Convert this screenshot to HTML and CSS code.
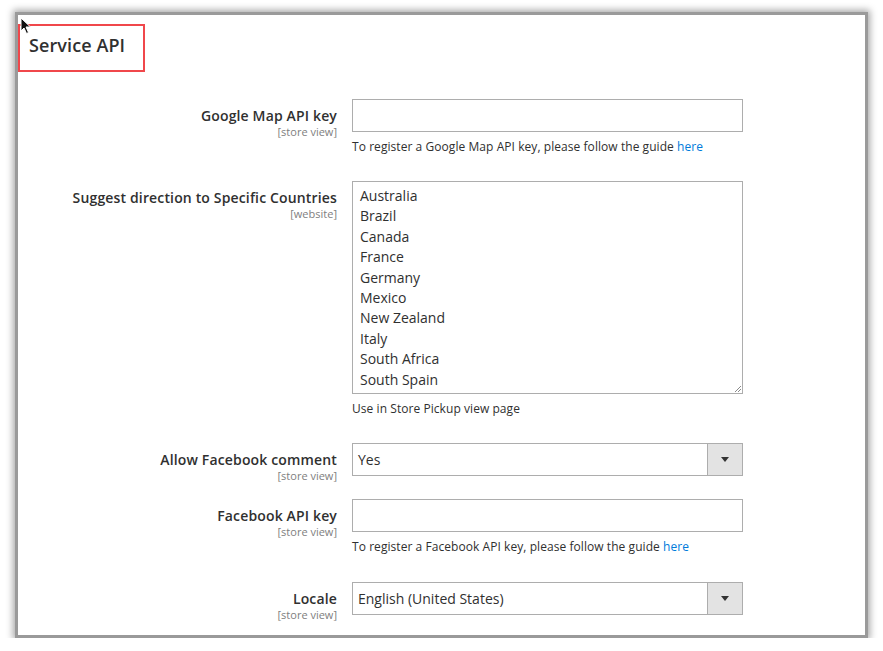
FILE: index.html
```html
<!DOCTYPE html>
<html>
<head>
<meta charset="utf-8">
<link rel="stylesheet" href="styles.css">
</head>
<body>
<div class="panel">
  <svg class="cursor" width="12" height="18" viewBox="0 0 12 18"><path d="M1 1 L1 14 L4 11 L6.5 16.5 L8.5 15.5 L6 10 L10.5 10 Z" fill="#111" stroke="#fff" stroke-width="1"/></svg>
  <div class="title-box"><h2 class="title">Service API</h2></div>

  <div class="row note-row">
    <div class="label"><div class="label-text">Google Map API key</div><div class="scope">[store view]</div></div>
    <div class="control">
      <div class="input"></div>
      <div class="note">To register a Google Map API key, please follow the guide <a href="#">here</a></div>
    </div>
  </div>

  <div class="row note-row">
    <div class="label"><div class="label-text">Suggest direction to Specific Countries</div><div class="scope">[website]</div></div>
    <div class="control">
      <div class="multiselect">
        <div class="opt">Australia</div>
        <div class="opt">Brazil</div>
        <div class="opt">Canada</div>
        <div class="opt">France</div>
        <div class="opt">Germany</div>
        <div class="opt">Mexico</div>
        <div class="opt">New Zealand</div>
        <div class="opt">Italy</div>
        <div class="opt">South Africa</div>
        <div class="opt">South Spain</div>
        <svg class="grip" width="9" height="9" viewBox="0 0 9 9"><path d="M8 2 L2 8 M8 5 L5 8" stroke="#8a8a8a" stroke-width="1"/></svg>
      </div>
      <div class="note">Use in Store Pickup view page</div>
    </div>
  </div>

  <div class="row plain-row">
    <div class="label"><div class="label-text">Allow Facebook comment</div><div class="scope">[store view]</div></div>
    <div class="control">
      <div class="select"><span class="value">Yes</span><span class="btn"><span class="tri"></span></span></div>
    </div>
  </div>

  <div class="row note-row note-row-wide">
    <div class="label"><div class="label-text">Facebook API key</div><div class="scope">[store view]</div></div>
    <div class="control">
      <div class="input"></div>
      <div class="note">To register a Facebook API key, please follow the guide <a href="#">here</a></div>
    </div>
  </div>

  <div class="row plain-row">
    <div class="label"><div class="label-text">Locale</div><div class="scope">[store view]</div></div>
    <div class="control">
      <div class="select"><span class="value">English (United States)</span><span class="btn"><span class="tri"></span></span></div>
    </div>
  </div>
</div>
</body>
</html>
```

FILE: styles.css
```css
html, body {
  margin: 0;
  padding: 0;
  background: #ffffff;
}
body {
  font-family: "Open Sans", "DejaVu Sans", sans-serif;
  color: #303030;
}
.panel {
  position: relative;
  box-sizing: border-box;
  margin: 12px 0 0 15px;
  width: 853px;
  height: 626px;
  border: 3px solid #9a9a9a;
  box-shadow: 0 0 7px 2px rgba(0, 0, 0, 0.35);
  background: #ffffff;
  overflow: hidden;
}
.cursor {
  position: absolute;
  left: 2px;
  top: 2px;
}
.title-box {
  box-sizing: border-box;
  margin-top: 9px;
  width: 127px;
  height: 48px;
  border: 2px solid #f0474b;
  padding: 7px 0 0 9px;
}
.title {
  margin: 0;
  font-size: 18px;
  line-height: 24px;
  font-weight: 600;
  letter-spacing: 0.1px;
  color: #303030;
}
.row {
  display: grid;
  grid-template-columns: 319px 391px;
  column-gap: 15px;
}
.title-box + .row { margin-top: 27px; }
.note-row { margin-bottom: 26px; }
.note-row-wide { margin-bottom: 27px; }
.plain-row { margin-bottom: 17px; }
.label {
  text-align: right;
  padding-top: 8px;
}
.label-text {
  font-size: 14px;
  line-height: 18px;
  font-weight: 600;
  letter-spacing: 0.15px;
  color: #303030;
}
.scope {
  font-size: 11px;
  line-height: 13px;
  color: #808080;
}
.input {
  box-sizing: border-box;
  height: 33px;
  border: 1px solid #adadad;
  background: #fff;
}
.note {
  margin-top: 7px;
  font-size: 12px;
  line-height: 16px;
  letter-spacing: 0.06px;
  color: #303030;
}
.note a {
  color: #007bdb;
  text-decoration: none;
}
.multiselect {
  position: relative;
  box-sizing: border-box;
  height: 213px;
  border: 1px solid #adadad;
  padding: 4px 0 0 7px;
}
.opt {
  font-size: 14px;
  line-height: 20.4px;
  color: #303030;
}
.grip {
  position: absolute;
  right: 0;
  bottom: 0;
}
.select {
  box-sizing: border-box;
  height: 33px;
  border: 1px solid #adadad;
  display: flex;
  align-items: stretch;
}
.value {
  flex: 1;
  padding-left: 5px;
  font-size: 14px;
  line-height: 31px;
  color: #303030;
}
.btn {
  width: 34px;
  background: #e3e3e3;
  border-left: 1px solid #adadad;
  display: flex;
  align-items: center;
  justify-content: center;
}
.tri {
  width: 0;
  height: 0;
  border-left: 4px solid transparent;
  border-right: 4px solid transparent;
  border-top: 5px solid #333;
}
```
